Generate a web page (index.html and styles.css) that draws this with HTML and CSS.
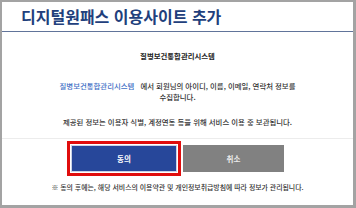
FILE: index.html
```html
<!DOCTYPE html>
<html lang="ko">
<head>
<meta charset="utf-8">
<link rel="stylesheet" href="styles.css">
</head>
<body>
<div class="frame">
  <header class="head">
    <h1 class="title">디지털원패스 이용사이트 추가</h1>
  </header>
  <section class="body">
    <p class="site">질병보건통합관리시스템</p>
    <p class="info"><span class="link">질병보건통합관리시스템</span> 에서 회원님의 아이디, 이름, 이메일, 연락처 정보를<br>수집합니다.</p>
    <p class="keep">제공된 정보는 이용자 식별, 계정연동 등을 위해 서비스 이용 중 보관됩니다.</p>
  </section>
  <section class="actions">
    <div class="btns">
      <button class="btn agree">동의</button>
      <button class="btn cancel">취소</button>
    </div>
    <p class="note">※ 동의 후에는, 해당 서비스의 이용약관 및 개인정보취급방침에 따라 정보가 관리됩니다.</p>
  </section>
</div>
</body>
</html>
```
FILE: styles.css
```css
* { box-sizing: border-box; }
html, body { margin: 0; padding: 0; background: #fff; }
body { font-family: "Noto Sans CJK KR", "Noto Sans", sans-serif; }
.frame {
  width: 356px;
  height: 208px;
  border-style: solid;
  border-color: #a3a3a3;
  border-width: 2px 3px 3px 2px;
  background: #fff;
  display: flex;
  flex-direction: column;
}
.head {
  height: 30px;
  border-bottom: 1px solid #61749a;
  padding-left: 19px;
}
.title {
  margin: 0;
  font-size: 16px;
  font-weight: 700;
  line-height: 29px;
  color: #223f7c;
}
.body {
  padding-top: 18px;
  text-align: center;
  color: #333;
  font-size: 7.4px;
  font-weight: 500;
  border-bottom: 1px solid #ececec;
  padding-bottom: 11px;
}
.body p { margin: 0; line-height: 11px; }
.site { font-weight: 700; color: #222; }
.info { margin-top: 19px !important; }
.link { color: #3d6ec5; font-weight: 500; margin-right: 4px; }
.keep { margin-top: 14px !important; }
.actions {
  padding-top: 6px;
  text-align: center;
}
.btns {
  display: flex;
  justify-content: center;
  gap: 6px;
}
.btn {
  height: 27px;
  border: 0;
  padding: 0;
  font-family: inherit;
  font-size: 7.5px;
  font-weight: 700;
}
.agree {
  width: 106px;
  background: #27479a;
  color: #fff;
  border: 1px solid #c9d2e6;
  outline: 3px solid #e00d0d;
  outline-offset: 1px;
}
.cancel {
  width: 101px;
  background: #818181;
  color: #eaeaea;
}
.note {
  margin: 10px 0 0;
  font-size: 6.9px;
  font-weight: 500;
  line-height: 10px;
  color: #333;
}
```
